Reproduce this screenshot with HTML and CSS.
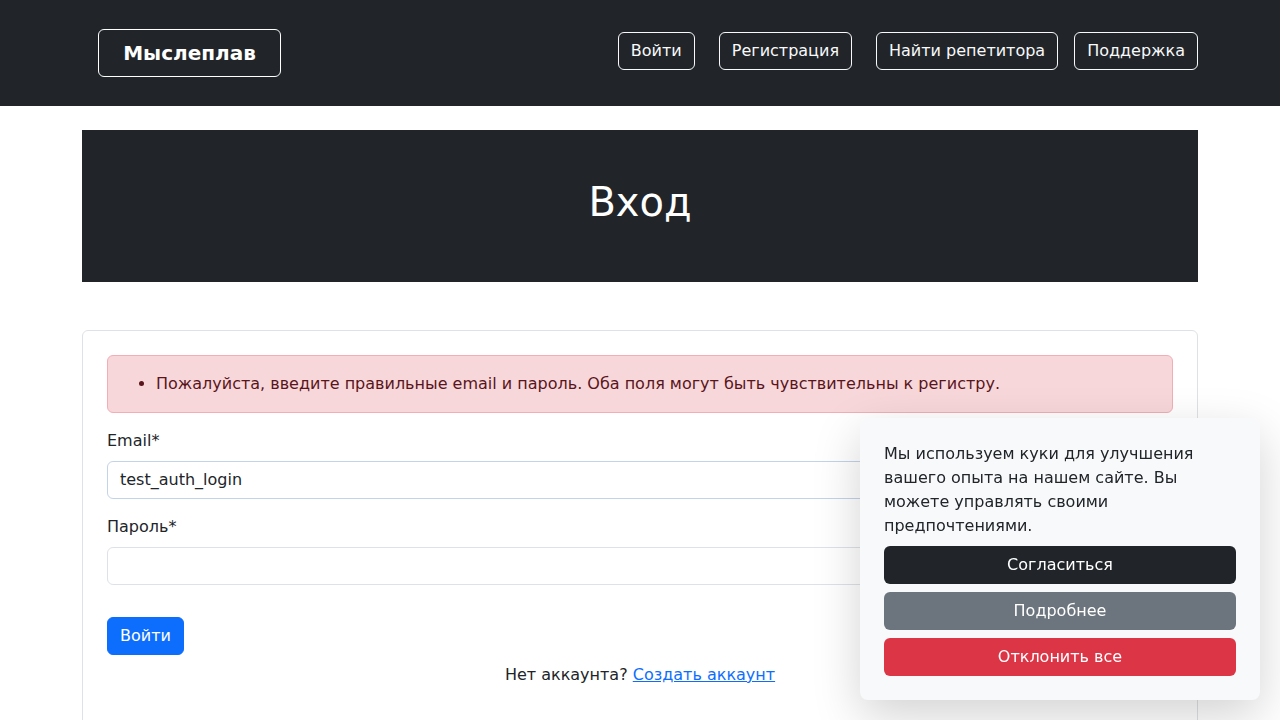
FILE: index.html
```html
<!DOCTYPE html>
<html lang="ru">
<head>
<meta charset="utf-8">
<title>Вход — Мыслеплав</title>
<link rel="stylesheet" href="styles.css">
</head>
<body>
<header class="navbar">
  <div class="container nav-inner">
    <a class="brand" href="#">Мыслеплав</a>
    <nav class="nav-links">
      <a class="nav-btn gap-24" href="#">Войти</a>
      <a class="nav-btn gap-24" href="#">Регистрация</a>
      <a class="nav-btn gap-16" href="#">Найти репетитора</a>
      <a class="nav-btn" href="#">Поддержка</a>
    </nav>
  </div>
</header>
<main class="container">
  <section class="hero">
    <h1>Вход</h1>
  </section>
  <section class="card">
    <div class="card-body">
      <div class="alert">
        <ul>
          <li>Пожалуйста, введите правильные email и пароль. Оба поля могут быть чувствительны к регистру.</li>
        </ul>
      </div>
      <form class="form">
        <div class="field">
          <label class="label" for="email">Email*</label>
          <input class="input input-filled" id="email" type="text" value="test_auth_login">
        </div>
        <div class="field">
          <label class="label" for="password">Пароль*</label>
          <input class="input" id="password" type="password">
        </div>
        <button class="btn-primary" type="button">Войти</button>
      </form>
      <p class="signup">Нет аккаунта? <a href="#">Создать аккаунт</a></p>
    </div>
  </section>
</main>
<div class="cookie">
  <p class="cookie-text">Мы используем куки для улучшения вашего опыта на нашем сайте. Вы можете управлять своими предпочтениями.</p>
  <button class="cookie-btn dark" type="button">Согласиться</button>
  <button class="cookie-btn grey" type="button">Подробнее</button>
  <button class="cookie-btn red" type="button">Отклонить все</button>
</div>
</body>
</html>
```
FILE: styles.css
```css
* { box-sizing: border-box; }
html, body { margin: 0; padding: 0; }
body {
  font-family: "DejaVu Sans", sans-serif;
  font-size: 16px;
  line-height: 1.5;
  color: #212529;
  background: #fff;
}
.container {
  width: 1116px;
  margin: 0 auto;
}
.navbar {
  background: #212529;
  padding: 29px 0;
}
.nav-inner {
  display: flex;
  justify-content: space-between;
  align-items: flex-start;
}
.brand {
  margin-left: 16px;
  display: block;
  border: 1px solid #fff;
  border-radius: 6px;
  padding: 8px 24px;
  color: #fff;
  font-weight: bold;
  font-size: 20px;
  line-height: 30px;
  text-decoration: none;
  width: 183px;
  text-align: center;
}
.nav-links {
  display: flex;
  margin-top: 3px;
}
.nav-btn {
  display: block;
  border: 1px solid #f8f9fa;
  border-radius: 6px;
  padding: 6px 12px;
  color: #f8f9fa;
  text-decoration: none;
  line-height: 24px;
}
.gap-24 { margin-right: 24px; }
.gap-16 { margin-right: 16px; }
.hero {
  margin-top: 24px;
  background: #212529;
  color: #fff;
  padding: 48px 0;
  text-align: center;
}
.hero h1 {
  margin: 0 0 8px;
  font-size: 40px;
  line-height: 48px;
  font-weight: 400;
}
.card {
  margin-top: 48px;
  border: 1px solid #dee2e6;
  border-radius: 6px;
}
.card-body { padding: 24px; }
.alert {
  background: #f8d7da;
  border: 1px solid #f1aeb5;
  color: #58151c;
  border-radius: 6px;
  padding: 16px;
  margin-bottom: 16px;
}
.alert ul { margin: 0; padding-left: 32px; }
.field { margin-bottom: 16px; }
.label { display: block; margin-bottom: 8px; }
.input {
  display: block;
  width: 100%;
  border: 1px solid #dee2e6;
  border-radius: 6px;
  padding: 6px 12px;
  font-family: inherit;
  font-size: 16px;
  line-height: 24px;
  color: #212529;
  background: #fff;
}
.input-filled { border-color: #c3d3ea; }
.btn-primary {
  margin-top: 16px;
  background: #0d6efd;
  color: #fff;
  border: 1px solid #0d6efd;
  border-radius: 6px;
  padding: 6px 12px;
  font-family: inherit;
  font-size: 16px;
  line-height: 24px;
}
.form { margin: 0; }
.signup {
  text-align: center;
  margin: 8px 0 16px;
}
.signup a { color: #0d6efd; }
.cookie {
  position: fixed;
  right: 20px;
  bottom: 20px;
  width: 400px;
  background: #f8f9fa;
  border-radius: 8px;
  padding: 24px;
  box-shadow: 0 16px 48px rgba(0,0,0,0.175);
}
.cookie-text { margin: 0 0 8px; }
.cookie-btn {
  display: block;
  width: 100%;
  border: 1px solid transparent;
  border-radius: 6px;
  padding: 6px 12px;
  color: #fff;
  font-family: inherit;
  font-size: 16px;
  line-height: 24px;
  margin-top: 8px;
}
.cookie-text + .cookie-btn { margin-top: 0; }
.dark { background: #212529; }
.grey { background: #6c757d; }
.red { background: #dc3545; }
```
